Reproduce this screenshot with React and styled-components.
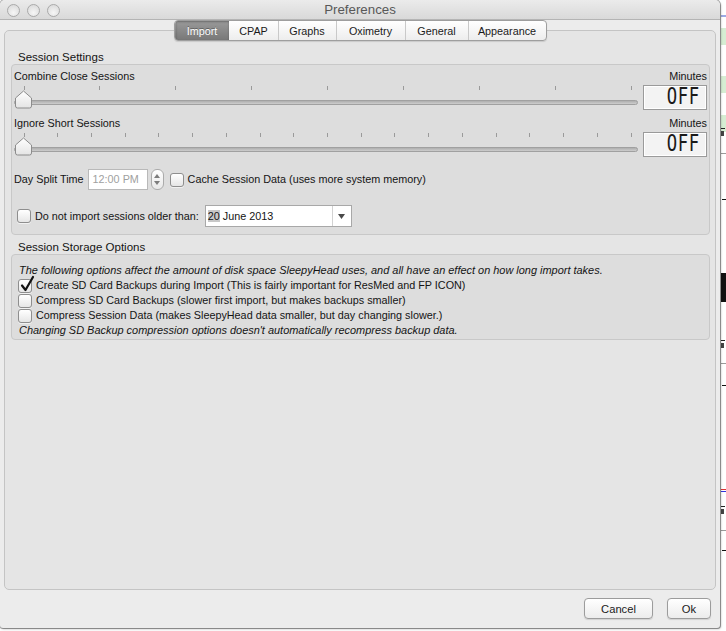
import React from "react";
import styled, { createGlobalStyle } from "styled-components";

const FONT = `"Liberation Sans", Arial, sans-serif`;

const GlobalStyle = createGlobalStyle`
  html, body { margin: 0; padding: 0; }
  body {
    background: #fbfbfb;
    font-family: ${FONT};
    font-size: 10.8px;
    color: #141414;
  }
  * { box-sizing: border-box; }
`;

const Desktop = styled.div`
  display: flex;
  align-items: flex-start;
  width: 726px;
  height: 631px;
  overflow: hidden;
  background: #fbfbfb;
`;

const Window = styled.div`
  flex: none;
  width: 720px;
  height: 628px;
  display: flex;
  flex-direction: column;
  background: #ececec;
  border-radius: 5px 5px 3px 3px;
  box-shadow: 0 0 0 1px rgba(0, 0, 0, 0.3), 1px 1px 2px rgba(0, 0, 0, 0.3);
  position: relative;
  z-index: 1;
  overflow: hidden;
`;

const TitleBar = styled.div`
  flex: none;
  height: 20px;
  display: grid;
  grid-template-columns: 1fr auto 1fr;
  align-items: center;
  background: linear-gradient(#ebebeb, #d9d9d9);
  border-bottom: 1px solid #b4b4b4;
`;

const Lights = styled.div`
  display: flex;
  gap: 7px;
  padding-left: 7px;
  padding-top: 1px;
`;

const Light = styled.span`
  width: 13px;
  height: 13px;
  border-radius: 50%;
  border: 1px solid #a9a9a9;
  background: radial-gradient(circle at 50% 70%, #f6f6f6, #d6d6d6);
`;

const Title = styled.div`
  font-size: 13.3px;
  color: #585858;
  line-height: 19px;
`;

const Body = styled.div`
  flex: 1;
  display: flex;
  flex-direction: column;
  min-height: 0;
`;

const TabBar = styled.div`
  align-self: center;
  position: relative;
  z-index: 2;
  display: flex;
  height: 21px;
  margin-bottom: -11px;
  border: 1px solid #9e9e9e;
  border-radius: 4px;
  overflow: hidden;
  background: linear-gradient(#ffffff, #ededed);
  box-shadow: 0 1px 1px rgba(0, 0, 0, 0.12);
`;

const Tab = styled.div`
  width: ${(p) => p.$w}px;
  display: flex;
  align-items: center;
  justify-content: center;
  font-size: 10.8px;
  color: ${(p) => (p.$active ? "#ffffff" : "#1a1a1a")};
  background: ${(p) =>
    p.$active ? "linear-gradient(#9a9a9a, #787878)" : "transparent"};
  text-shadow: ${(p) => (p.$active ? "0 -1px 0 rgba(0,0,0,0.35)" : "none")};
  border-left: 1px solid ${(p) => (p.$sep ? "#c9c9c9" : "transparent")};
  box-shadow: ${(p) => (p.$active ? "inset 0 1px 2px rgba(0,0,0,0.3)" : "none")};
`;

const Pane = styled.div`
  flex: 1;
  margin: 0 4px;
  border: 1px solid #c4c4c4;
  border-radius: 5px;
  background: #e5e5e5;
  padding: 19px 5px 0 6px;
  display: flex;
  flex-direction: column;
`;

const SectionTitle = styled.div`
  font-size: 11.5px;
  line-height: 14px;
  padding-left: 7px;
  margin-top: ${(p) => p.$mt || 0}px;
  color: #141414;
`;

const Group = styled.div`
  border: 1px solid #c8c8c8;
  border-radius: 4px;
  background: #dddddd;
  padding: ${(p) => p.$pad};
  display: flex;
  flex-direction: column;
`;

const SliderBlock = styled.div`
  display: grid;
  grid-template-columns: 1fr 64px;
  column-gap: 5px;
  row-gap: 2px;
  margin-top: ${(p) => p.$mt || 0}px;
`;

const Label = styled.span`
  line-height: 13px;
  white-space: nowrap;
`;

const Unit = styled.span`
  line-height: 13px;
  text-align: right;
`;

const SliderSvg = styled.svg`
  display: block;
  width: 100%;
  height: 25px;
`;

const Lcd = styled.div`
  height: 25px;
  border: 1px solid #9a9a9a;
  background: #f3f3f3;
  box-shadow: inset 0 0 0 1px #ffffff;
  display: flex;
  align-items: center;
  justify-content: flex-end;
  padding-right: 6px;
`;

const LcdText = styled.span`
  font-family: "DejaVu Sans Mono", monospace;
  font-size: 15px;
  line-height: 15px;
  letter-spacing: 0.5px;
  color: #1a1a1a;
  transform: scale(1.15, 1.5);
  transform-origin: right center;
`;

const Row = styled.div`
  display: flex;
  align-items: center;
  height: ${(p) => p.$h || 21}px;
  margin-top: ${(p) => p.$mt || 0}px;
`;

const TimeEdit = styled.div`
  width: 60px;
  height: 21px;
  margin-left: 4px;
  border: 1px solid #b9b9b9;
  background: #ffffff;
  color: #a0a0a0;
  line-height: 19px;
  padding-left: 4px;
`;

const Spinner = styled.div`
  width: 13px;
  height: 21px;
  margin-left: 3px;
  border: 1px solid #ababab;
  border-radius: 6px;
  background: linear-gradient(#ffffff, #e8e8e8);
  display: flex;
  flex-direction: column;
  align-items: center;
  justify-content: center;
  gap: 3px;
`;

const Box = styled.span`
  position: relative;
  flex: none;
  width: 14px;
  height: 14px;
  margin-left: ${(p) => p.$ml || 0}px;
  border: 1px solid #8e8e8e;
  border-radius: 3px;
  background: linear-gradient(#ffffff, #e6e6e6);
  box-shadow: 0 1px 0 rgba(255, 255, 255, 0.6);
`;

const Tick = styled.svg`
  position: absolute;
  left: 1px;
  top: -4px;
  width: 14px;
  height: 17px;
  overflow: visible;
`;

const CheckText = styled.span`
  margin-left: 4px;
  line-height: 15px;
  white-space: nowrap;
`;

const DateEdit = styled.div`
  width: 147px;
  height: 22px;
  margin-left: 6px;
  border: 1px solid #a8a8a8;
  background: #ffffff;
  display: flex;
`;

const DateText = styled.div`
  flex: 1;
  padding-left: 2px;
  line-height: 20px;
  white-space: nowrap;
`;

const Selected = styled.span`
  background: #c7c7c7;
`;

const DropButton = styled.div`
  width: 19px;
  border-left: 1px solid #d2d2d2;
  display: flex;
  align-items: center;
  justify-content: center;
`;

const Note = styled.div`
  font-style: italic;
  font-size: 10.95px;
  line-height: 15px;
  padding-left: 1px;
  white-space: nowrap;
`;

const CheckRow = styled.div`
  display: flex;
  align-items: center;
  height: 15px;
`;

const ButtonRow = styled.div`
  flex: none;
  display: flex;
  justify-content: flex-end;
  gap: 14px;
  padding: 8px 9px 9px 0;
`;

const Button = styled.div`
  width: ${(p) => p.$w}px;
  height: 21px;
  border: 1px solid #9c9c9c;
  border-radius: 4px;
  background: linear-gradient(#ffffff, #ececec);
  box-shadow: 0 1px 1px rgba(0, 0, 0, 0.12);
  display: flex;
  align-items: center;
  justify-content: center;
  font-size: 11.2px;
  color: #1a1a1a;
`;

const Backdrop = styled.svg`
  flex: none;
  width: 6px;
  height: 631px;
  display: block;
`;

function Slider({ ticks }) {
  const span = 607;
  const xs = Array.from({ length: ticks }, (_, i) => 9.5 + (i * span) / (ticks - 1));
  return (
    <SliderSvg viewBox="0 0 624 25" preserveAspectRatio="none">
      <defs>
        <linearGradient id="thumbFill" x1="0" y1="0" x2="0" y2="1">
          <stop offset="0" stopColor="#ffffff" />
          <stop offset="1" stopColor="#e4e4e4" />
        </linearGradient>
        <linearGradient id="trackFill" x1="0" y1="0" x2="0" y2="1">
          <stop offset="0" stopColor="#a9a9a9" />
          <stop offset="1" stopColor="#d2d2d2" />
        </linearGradient>
      </defs>
      {xs.map((x, i) => (
        <line key={i} x1={Math.round(x) + 0.5} x2={Math.round(x) + 0.5} y1="1" y2="5" stroke="#9a9a9a" strokeWidth="1" />
      ))}
      <rect x="0.5" y="15.5" width="623" height="4" rx="2" fill="url(#trackFill)" stroke="#a0a0a0" />
      <path
        d="M9.5 6 L17.5 13 V21 Q17.5 23 15.5 23 H3.5 Q1.5 23 1.5 21 V13 Z"
        fill="url(#thumbFill)"
        stroke="#8c8c8c"
      />
    </SliderSvg>
  );
}

function CheckBox({ checked, ml }) {
  return (
    <Box $ml={ml}>
      {checked && (
        <Tick viewBox="0 0 14 17">
          <path d="M2 9.5 L5.5 14 L13 1" fill="none" stroke="#111" strokeWidth="2.2" strokeLinecap="round" strokeLinejoin="round" />
        </Tick>
      )}
    </Box>
  );
}

const tabs = [
  { t: "Import", w: 54 },
  { t: "CPAP", w: 49 },
  { t: "Graphs", w: 58 },
  { t: "Oximetry", w: 69 },
  { t: "General", w: 63 },
  { t: "Appearance", w: 78 },
];

export default function App() {
  return (
    <>
      <GlobalStyle />
      <Desktop>
        <Window>
          <TitleBar>
            <Lights>
              <Light />
              <Light />
              <Light />
            </Lights>
            <Title>Preferences</Title>
            <span />
          </TitleBar>
          <Body>
            <TabBar>
              {tabs.map((tab, i) => (
                <Tab key={tab.t} $w={tab.w} $active={i === 0} $sep={i > 1}>
                  {tab.t}
                </Tab>
              ))}
            </TabBar>
            <Pane>
              <SectionTitle>Session Settings</SectionTitle>
              <Group $pad="5px 2px 7px 2px">
                <SliderBlock>
                  <Label>Combine Close Sessions</Label>
                  <Unit>Minutes</Unit>
                  <Slider ticks={9} />
                  <Lcd>
                    <LcdText>OFF</LcdText>
                  </Lcd>
                </SliderBlock>
                <SliderBlock $mt={7}>
                  <Label>Ignore Short Sessions</Label>
                  <Unit>Minutes</Unit>
                  <Slider ticks={19} />
                  <Lcd>
                    <LcdText>OFF</LcdText>
                  </Lcd>
                </SliderBlock>
                <Row $mt={12}>
                  <Label>Day Split Time</Label>
                  <TimeEdit>12:00 PM</TimeEdit>
                  <Spinner>
                    <svg width="6" height="4" viewBox="0 0 6 4">
                      <path d="M0 4 L3 0 L6 4 Z" fill="#7c7c7c" />
                    </svg>
                    <svg width="6" height="4" viewBox="0 0 6 4">
                      <path d="M0 0 L3 4 L6 0 Z" fill="#7c7c7c" />
                    </svg>
                  </Spinner>
                  <CheckBox ml={6} />
                  <CheckText>Cache Session Data (uses more system memory)</CheckText>
                </Row>
                <Row $mt={15} $h={22}>
                  <CheckBox ml={3} />
                  <CheckText>Do not import sessions older than:</CheckText>
                  <DateEdit>
                    <DateText>
                      <Selected>20</Selected> June 2013
                    </DateText>
                    <DropButton>
                      <svg width="7" height="5" viewBox="0 0 7 5">
                        <path d="M0 0 L7 0 L3.5 5 Z" fill="#4a4a4a" />
                      </svg>
                    </DropButton>
                  </DateEdit>
                </Row>
              </Group>
              <SectionTitle $mt={5}>Session Storage Options</SectionTitle>
              <Group $pad="8px 4px 1px 6px">
                <Note>
                  The following options affect the amount of disk space SleepyHead uses, and all have an effect on how long import takes.
                </Note>
                <CheckRow>
                  <CheckBox checked />
                  <CheckText>
                    Create SD Card Backups during Import (This is fairly important for ResMed and FP ICON)
                  </CheckText>
                </CheckRow>
                <CheckRow>
                  <CheckBox />
                  <CheckText>Compress SD Card Backups (slower first import, but makes backups smaller)</CheckText>
                </CheckRow>
                <CheckRow>
                  <CheckBox />
                  <CheckText>Compress Session Data (makes SleepyHead data smaller, but day changing slower.)</CheckText>
                </CheckRow>
                <Note>Changing SD Backup compression options doesn't automatically recompress backup data.</Note>
              </Group>
            </Pane>
            <ButtonRow>
              <Button $w={69}>Cancel</Button>
              <Button $w={44}>Ok</Button>
            </ButtonRow>
          </Body>
        </Window>
        <Backdrop viewBox="0 0 6 631">
          <rect x="0" y="0" width="6" height="631" fill="#ffffff" />
          <rect x="1" y="15.5" width="5" height="1" fill="#3b56c9" />
          <rect x="1" y="28" width="5" height="17" fill="#d6edd3" />
          <rect x="1" y="76" width="5" height="17" fill="#d6edd3" />
          <rect x="1" y="115" width="5" height="17" fill="#d6edd3" />
          <rect x="1" y="128" width="4" height="1" fill="#222" />
          <rect x="1" y="131" width="3" height="5" fill="#444" />
          <rect x="1" y="153" width="5" height="1" fill="#9a9a9a" />
          <rect x="2" y="199" width="4" height="1" fill="#111" />
          <rect x="1" y="273" width="5" height="29" fill="#111" />
          <rect x="1" y="340" width="4" height="1" fill="#222" />
          <rect x="1" y="343" width="3" height="5" fill="#444" />
          <rect x="1" y="363" width="5" height="1" fill="#9a9a9a" />
          <rect x="2" y="385" width="4" height="1" fill="#111" />
          <rect x="1" y="489" width="5" height="1" fill="#d33" />
          <rect x="1" y="491" width="5" height="1" fill="#33d" />
          <rect x="1" y="506" width="4" height="1" fill="#222" />
          <rect x="1" y="509" width="3" height="5" fill="#444" />
          <rect x="1" y="530" width="5" height="1" fill="#9a9a9a" />
          <rect x="2" y="550" width="4" height="1" fill="#111" />
        </Backdrop>
      </Desktop>
    </>
  );
}
